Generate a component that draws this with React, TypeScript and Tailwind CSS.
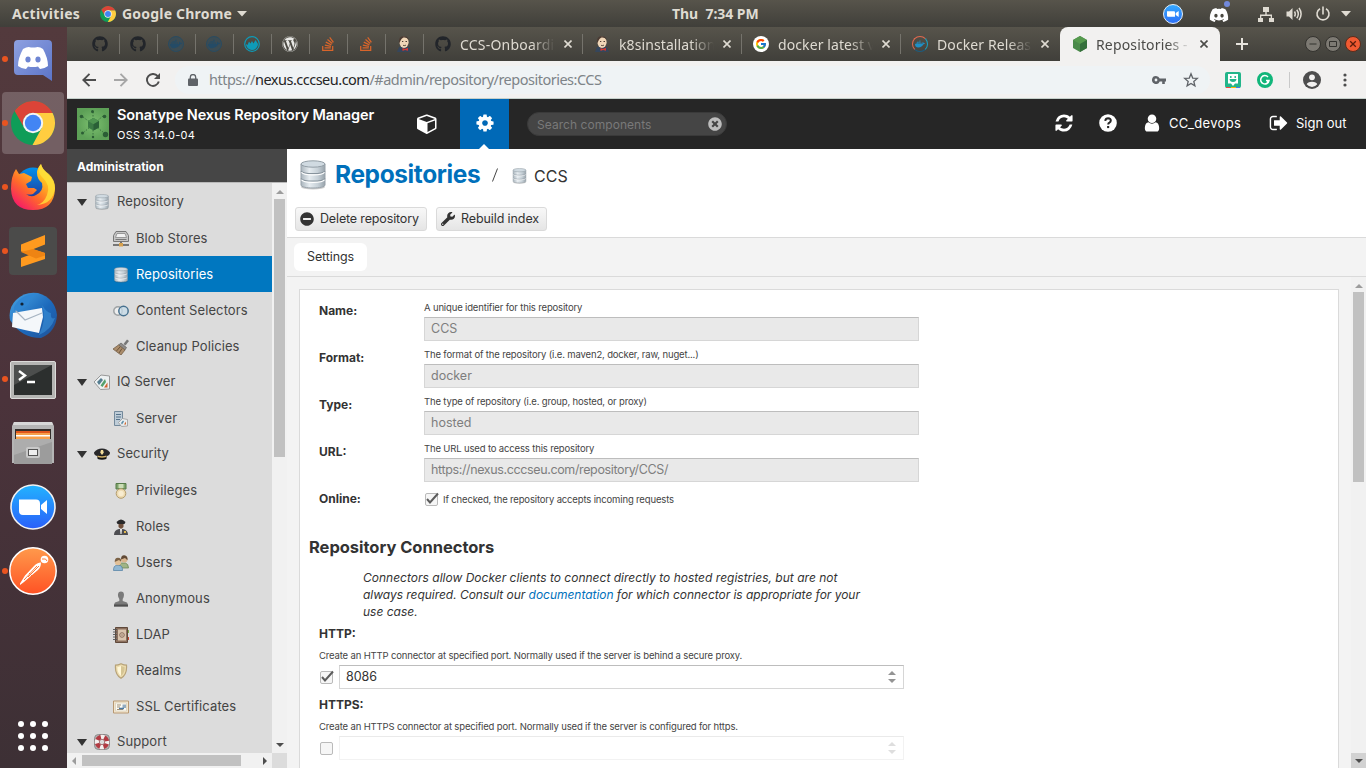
import React from "react";
import { FaGithub, FaWordpress, FaDocker, FaDiscord, FaWrench, FaMinusCircle, FaTimesCircle, FaStackOverflow } from "react-icons/fa";
import { FcGoogle } from "react-icons/fc";

type IconProps = { className?: string };

const PATHS = {
  cube: "M896 1629l640-349v-636l-640 233v752zm-64-865l698-254-698-254-698 254zm832-252v768q0 35-18 65t-49 47l-704 384q-28 16-61 16t-61-16l-704-384q-31-17-49-47t-18-65v-768q0-40 23-73t61-47l704-256q22-8 44-8t44 8l704 256q38 14 61 47t23 73z",
  cog: "M1152 896q0-106-75-181t-181-75-181 75-75 181 75 181 181 75 181-75 75-181zm512-109v222q0 12-8 23t-20 13l-185 28q-19 54-39 91 35 50 107 138 10 12 10 25t-9 23q-27 37-99 108t-94 71q-12 0-26-9l-138-108q-44 23-91 38-16 136-29 186-7 28-36 28h-222q-14 0-24.5-8.5t-11.5-21.5l-28-184q-49-16-90-37l-141 107q-10 9-25 9-14 0-25-11-126-114-165-168-7-10-7-23 0-12 8-23 15-21 51-66.5t54-70.5q-27-50-41-99l-183-27q-13-2-21-12.5t-8-23.5v-222q0-12 8-23t19-13l186-28q14-46 39-92-40-57-107-138-10-12-10-24 0-10 9-23 26-36 98.5-107.5t94.5-71.5q13 0 26 10l138 107q44-23 91-38 16-136 29-186 7-28 36-28h222q14 0 24.5 8.5t11.5 21.5l28 184q49 16 90 37l142-107q9-9 24-9 13 0 25 10 129 119 165 170 7 8 7 22 0 12-8 23-15 21-51 66.5t-54 70.5q26 50 41 98l183 28q13 2 21 12.5t8 23.5z",
  refresh: "M1639 1056q0 5-1 7-64 268-268 434.5t-478 166.5q-146 0-282.5-55t-243.5-157l-129 129q-19 19-45 19t-45-19-19-45v-448q0-26 19-45t45-19h448q26 0 45 19t19 45-19 45l-137 137q71 66 161 102t187 36q134 0 250-65t186-179q11-17 53-117 8-23 30-23h192q13 0 22.5 9.5t9.5 22.5zm25-800v448q0 26-19 45t-45 19h-448q-26 0-45-19t-19-45 19-45l138-138q-148-137-349-137-134 0-250 65t-186 179q-11 17-53 117-8 23-30 23h-199q-13 0-22.5-9.5t-9.5-22.5v-7q65-268 270-434.5t480-166.5q146 0 284 55.5t245 156.5l130-129q19-19 45-19t45 19 19 45z",
  user: "M1536 1399q0 109-62.5 187t-150.5 78h-854q-88 0-150.5-78t-62.5-187q0-85 8.5-160.5t31.5-152 58.5-131 94-89 134.5-34.5q131 128 313 128t313-128q76 0 134.5 34.5t94 89 58.5 131 31.5 152 8.5 160.5zm-256-887q0 159-112.5 271.5t-271.5 112.5-271.5-112.5-112.5-271.5 112.5-271.5 271.5-112.5 271.5 112.5 112.5 271.5z",
  signOut: "M704 1440q0 4 1 20t.5 26.5-3 23.5-10 19.5-20.5 6.5h-320q-119 0-203.5-84.5t-84.5-203.5v-704q0-119 84.5-203.5t203.5-84.5h320q13 0 22.5 9.5t9.5 22.5q0 4 1 20t.5 26.5-3 23.5-10 19.5-20.5 6.5h-320q-66 0-113 47t-47 113v704q0 66 47 113t113 47h312l11.5 1 11.5 3 8 5.5 7 9 2 13.5zm928-544q0 26-19 45l-544 544q-19 19-45 19t-45-19-19-45v-288h-448q-26 0-45-19t-19-45v-384q0-26 19-45t45-19h448v-288q0-26 19-45t45-19 45 19l544 544q19 19 19 45z",
};

function Glyph({ d, className }: { d: string; className?: string }) {
  return <svg viewBox="0 0 1792 1792" fill="currentColor" className={className}><path d={d} /></svg>;
}

function Chrome({ className }: IconProps) {
  return (
    <svg viewBox="0 0 44 44" className={className}>
      <circle cx="22" cy="22" r="22" fill="#0f9d58" />
      <path d="M22 12h19.6A22 22 0 0 1 21.500 44L30.700 27z" fill="#ffcd40" />
      <path d="M3.600 10A22 22 0 0 1 41.600 12H22A10 10 0 0 0 13.300 27z" fill="#db4437" />
      <circle cx="22" cy="22" r="10.200" fill="#f5f5f5" />
      <circle cx="22" cy="22" r="8.200" fill="#4285f4" />
    </svg>
  );
}

function Jenkins({ className }: IconProps) {
  return (
    <svg viewBox="0 0 16 16" className={className}>
      <path d="M1 16l2-5 4-1 6 1 2 5z" fill="#35465c" />
      <ellipse cx="8" cy="6.200" rx="4.600" ry="5.700" fill="#f0d6b7" />
      <path d="M3.300 7.500C2 2 5 .3 8 .3s5 2 4.400 3.600C11 1.800 9 1.200 7 1.800 5 2.600 4.600 5 3.300 7.500z" fill="#4a3a32" />
      <path d="M6 5.500h1.300M9.500 5.500H11M7 9.200c1 .6 2 .5 3-.2" stroke="#3b2c25" strokeWidth=".9" fill="none" />
      <path d="M6.500 12l2.500 1 3-1.300v3L9 14l-2.500 1z" fill="#d33833" />
    </svg>
  );
}

function Whale({ className }: IconProps) {
  return (
    <span className={"flex items-center justify-center rounded-full border border-[#2a4b60] bg-[#3c4c53] text-[#244b66] " + className}>
      <FaDocker className="size-3" />
    </span>
  );
}

function BlueLogo() {
  return (
    <svg viewBox="0 0 16 16" className="size-4">
      <circle cx="8" cy="8" r="7.300" fill="none" stroke="#0e9bb8" strokeWidth="1.200" />
      <path d="M2 8l1.500 1L5 5.500 6.500 7.500 8 5l1.500 2.500L11.500 4l2.500 4a6 6 0 0 1-12 0z" fill="#0e9bb8" />
    </svg>
  );
}

function NexusHex({ className }: IconProps) {
  return (
    <svg viewBox="0 0 16 16" className={className}>
      <path d="M8 0l7 4v8l-7 4-7-4V4z" fill="#4a8a4a" />
      <path d="M8 0l7 4-7 4-7-4z" fill="#569a4e" />
      <path d="M8 8l7-4v8l-7 4z" fill="#35703c" />
    </svg>
  );
}

function Database({ className }: IconProps) {
  return (
    <svg viewBox="0 0 26 30" className={className}>
      <defs>
        <linearGradient id="steel" x1="0" x2="1">
          <stop offset="0" stopColor="#aab5bd" /><stop offset=".35" stopColor="#e6ecf0" />
          <stop offset=".7" stopColor="#c6d0d7" /><stop offset="1" stopColor="#98a3ab" />
        </linearGradient>
      </defs>
      <ellipse cx="13" cy="27" rx="12" ry="2.500" fill="#000" opacity=".2" />
      <path d="M1 4v21c0 4 24 4 24 0V4z" fill="url(#steel)" stroke="#98a2aa" strokeWidth="1" />
      <ellipse cx="13" cy="4" rx="12" ry="3.200" fill="#d0dae1" stroke="#939ea6" strokeWidth="1" />
      <path d="M1 11c2 3.500 22 3.500 24 0M1 18.500c2 3.500 22 3.500 24 0" fill="none" stroke="#87939c" strokeWidth="1.200" />
      <path d="M1.500 12.200c2 3.500 21 3.500 23 0M1.500 19.700c2 3.500 21 3.500 23 0" fill="none" stroke="#fff" strokeWidth="1.200" />
    </svg>
  );
}

/* ---------- top desktop bar ---------- */
function DesktopBar() {
  return (
    <div className="flex h-[27px] shrink-0 items-center bg-linear-to-b from-[#57544b] to-[#403f3a] font-['Noto_Sans','Open_Sans',sans-serif] text-[14px] font-bold text-[#dfdbd2]">
      <span className="w-[88px] pl-3 tracking-[0.32px]">Activities</span>
      <div className="flex w-[584px] items-center pl-3">
        <Chrome className="size-4" />
        <span className="ml-[6px] w-[111px] tracking-[0.2px] whitespace-nowrap">Google Chrome</span>
        <svg viewBox="0 0 10 6" className="ml-1 h-[6px] w-[10px]"><path d="M0 0h10L5 5.500z" fill="#dfdbd2" /></svg>
      </div>
      <span className="w-[491px] whitespace-pre text-[14px] tracking-[-0.03px]">Thu  7:34 PM</span>
      <svg viewBox="0 0 20 20" className="size-5">
        <defs><linearGradient id="zoomSmall" x2="0" y2="1"><stop stopColor="#34aaff" /><stop offset="1" stopColor="#2d6ff7" /></linearGradient></defs>
        <circle cx="10" cy="10" r="9.500" fill="url(#zoomSmall)" stroke="#e5eef5" />
        <path d="M4 7.200h7q1 0 1 1v4.600H5q-1 0-1-1zM12.700 9l3-2v6l-3-2z" fill="#fff" />
      </svg>
      <span className="relative ml-[26px] flex">
        <FaDiscord className="size-5 translate-y-px text-white" />
        <i className="absolute -right-px -top-[3px] size-1.5 rounded-full bg-[#7289da]" />
      </span>
      <svg viewBox="0 0 16 16" className="ml-[29px] size-4 translate-y-px" fill="#dfdbd2"><path d="M5 0h6v5H8.700v2.500H14V11h2v4h-5v-4h1.700V8.900H3.300V11H5v4H0v-4h2V7.500h5.300V5H5z" /></svg>
      <svg viewBox="0 0 16 16" className="ml-3 size-4" fill="none" stroke="#dfdbd2" strokeWidth="1.500"><path d="M.5 5.500H3L6.500 2v12L3 10.500H.5z" fill="#dfdbd2" stroke="none" /><path d="M8.500 5.500q1.500 2.500 0 5M10.800 3.800q3 4.200 0 8.400M13 2q4.200 6 0 12" /></svg>
      <svg viewBox="0 0 16 16" className="ml-[13px] size-4" fill="none" stroke="#dfdbd2" strokeWidth="1.600"><path d="M8 .5v8M5 2.700a6 6 0 1 0 6 0" /></svg>
      <svg viewBox="0 0 10 6" className="ml-[10px] h-[6px] w-[10px]"><path d="M0 0h10L5 5.500z" fill="#dfdbd2" /></svg>
    </div>
  );
}

/* ---------- launcher ---------- */
function DockItem({ children, running, active }: { children: React.ReactNode; running?: boolean; active?: boolean }) {
  return (
    <div className={"relative flex h-[62px] w-[62px] items-center justify-center rounded-[4px] " + (active ? "bg-white/20" : "")}>
      {running && <i className="absolute left-0 top-7 size-[6px] rounded-full bg-[#e95420]" />}
      {children}
    </div>
  );
}

function Dock() {
  return (
    <aside className="flex w-[67px] shrink-0 flex-col items-center gap-[2px] bg-linear-to-b from-[#533a3d] via-[#4b333b] to-[#3d3035] pt-px pr-[2px]">
      <DockItem running>
        <svg viewBox="0 0 38 41" className="h-[41px] w-[38px] translate-y-px">
          <defs><linearGradient id="dsc" x2="1" y2="1"><stop stopColor="#8ea1e1" /><stop offset="1" stopColor="#5b74c8" /></linearGradient></defs>
          <path d="M4 0h30q4 0 4 4v37l-9-6H4q-4 0-4-4V4q0-4 4-4z" fill="url(#dsc)" />
          <path d="M9 9q5-3 8-1.500h4Q25 6 29 9q5 9 5 17-4 3-8 3l-2-2.500q-5 1-10 0L12 29q-4 0-8-3 0-8 5-17z" fill="#fff" />
          <ellipse cx="14" cy="19.500" rx="2.600" ry="3" fill="#6e85d3" /><ellipse cx="24" cy="19.500" rx="2.600" ry="3" fill="#6e85d3" />
        </svg>
      </DockItem>
      <DockItem running active><Chrome className="size-11" /></DockItem>
      <DockItem running>
        <svg viewBox="0 0 44 46" className="h-[46px] w-[44px]">
          <defs>
            <linearGradient id="foxA" x1="1" x2=".2" y2="1"><stop stopColor="#fff44f" /><stop offset=".35" stopColor="#ffbd20" /><stop offset=".65" stopColor="#ff6a2a" /><stop offset="1" stopColor="#f5156c" /></linearGradient>
            <linearGradient id="foxB" x2="0" y2="1"><stop stopColor="#0090ed" /><stop offset="1" stopColor="#253494" /></linearGradient>
          </defs>
          <circle cx="22" cy="20" r="16.500" fill="url(#foxB)" />
          <path d="M5 5l3 5 5-1 8 4-1 4-5 3 2 4 6 0 3 2-4 4q-4 1-7 0 5 4 10 1 8-4 6-12-5-4-5-10 0-5 4-9 1 5 6 9 8 7 8 16-1 21-22 21T0 25Q0 12 5 5z" fill="url(#foxA)" />
          <path d="M30 0q-5 7 1 13 9 8 5 18-3 8-10 10 16-1 18-17 0-8-6-14Q31 5 30 0z" fill="#ffe03a" opacity=".8" />
        </svg>
      </DockItem>
      <DockItem running>
        <svg viewBox="0 0 48 48" className="size-12">
          <rect width="48" height="48" rx="4" fill="#4b4b4a" />
          <path d="M12 17.500L36 8v9.500l-12 4.700 12 3.800v6L12 40v-9l11-4-11-2.500z" fill="#ff9a1f" />
          <path d="M12 25l12-3 12 4v2.500l-9 3z" fill="#ee8413" />
        </svg>
      </DockItem>
      <DockItem>
        <svg viewBox="0 0 48 48" className="size-12">
          <defs><linearGradient id="bird" x2="1" y2="1"><stop stopColor="#4aa6e5" /><stop offset=".55" stopColor="#1c69bb" /><stop offset="1" stopColor="#215196" /></linearGradient></defs>
          <path d="M7 9Q16 0 29 2q17 5 19 22-1 17-16 23-20 0-31-18Q-1 17 7 9z" fill="url(#bird)" />
          <path d="M3 36l1-14L33 17l1 9-4 16Q15 39 3 36z" fill="#f4f7fa" />
          <path d="M6 19l10 10 17-7" fill="none" stroke="#a7b4c2" strokeWidth="1.200" />
          <path d="M5 16Q12 2 30 3 20 6 20 13q-6 6-15 7z" fill="#2f86d3" /><circle cx="13" cy="13" r="1.600" fill="#123" />
          <path d="M33 14q5 14-3 30 12-5 16-17-5 2-4-5-4 0-9-8z" fill="#3a91d9" opacity=".6" />
        </svg>
      </DockItem>
      <DockItem running>
        <svg viewBox="0 0 46 38" className="h-[38px] w-[46px] translate-y-px">
          <rect x=".5" y=".5" width="45" height="37" rx="1.500" fill="#b5b5b3" stroke="#dcdcda" />
          <rect x="4" y="4" width="38" height="30" fill="#2c2f2e" /><path d="M4 4h38L4 24z" fill="#6b6d6b" opacity=".5" />
          <path d="M9 10l6 4.500L9 19M17 21h8" fill="none" stroke="#fff" strokeWidth="2.400" />
        </svg>
      </DockItem>
      <DockItem>
        <svg viewBox="0 0 42 44" className="h-[44px] w-[42px]">
          <path d="M2 1h38l2 4v37H0V5z" fill="#b5b5b5" /><path d="M2 1h38l1 3H1z" fill="#d8d8d8" />
          <path d="M3 8h36v11H3z" fill="#332d2a" /><path d="M4 10h34v8H4z" fill="#e0561d" /><path d="M4 12h34v7H4z" fill="#f6a04d" /><path d="M4 14h34v1.500H4z" fill="#fff" />
          <path d="M2 18h38v25H2z" fill="#9c9c9c" /><path d="M2 18h38v3L2 34z" fill="#adadad" />
          <rect x="14" y="26" width="14" height="11" rx="2" fill="#c9c9c9" /><rect x="16.500" y="28.500" width="9" height="6" fill="#eee" stroke="#555" />
        </svg>
      </DockItem>
      <DockItem>
        <svg viewBox="0 0 46 46" className="size-[46px]">
          <defs><linearGradient id="zoomBig" x2="0" y2="1"><stop stopColor="#22b3ff" /><stop offset="1" stopColor="#2a5ff9" /></linearGradient></defs>
          <circle cx="23" cy="23" r="22" fill="url(#zoomBig)" stroke="#f2f2f2" strokeWidth="1.600" />
          <path d="M9 15.500h17q4 0 4 4V31H13q-4 0-4-4zM31 21l6-5v14l-6-5z" fill="#fff" />
        </svg>
      </DockItem>
      <DockItem running>
        <svg viewBox="0 0 48 48" className="size-12">
          <defs><linearGradient id="pm" x2="0" y2="1"><stop stopColor="#ff9a4c" /><stop offset="1" stopColor="#ff5224" /></linearGradient></defs>
          <circle cx="24" cy="24" r="23.200" fill="url(#pm)" stroke="#fff" strokeWidth="1.500" />
          <path d="M11 36.500l5-8L25 19q3-3.500 7-3.500 0 4.500-3 7.500l-6 5-8 7-4 3z" fill="#fff" /><circle cx="35.500" cy="12.500" r="3.800" fill="#fff" />
          <path d="M15 33l13-14M19 30l11-11M20 26l3 3M33 12h3.500l1.500 2" fill="none" stroke="#ff7a38" strokeWidth="1" />
        </svg>
      </DockItem>
      <div className="mt-auto mb-[17px] grid grid-cols-3 gap-[6px]">
        {Array.from({ length: 9 }, (_, i) => <i key={i} className="size-[6px] rounded-full bg-white" />)}
      </div>
    </aside>
  );
}

/* ---------- browser ---------- */
const ORANGE = <FaStackOverflow className="size-4 text-[#d9652b]" />;
const PINNED = [
  <FaGithub className="size-4 text-[#22252a]" />, <FaGithub className="size-4 text-[#22252a]" />,
  <Whale className="size-4" />, <Whale className="size-4" />, <BlueLogo />,
  <FaWordpress className="size-4 text-[#e9e9e6]" />, ORANGE, ORANGE, <Jenkins className="size-4" />,
];
const TABS = [
  { icon: <FaGithub className="size-4 text-[#22252a]" />, title: "CCS-Onboardi", tone: "tracking-[0.2px]" },
  { icon: <Jenkins className="size-4" />, title: "k8sinstallation", tone: "tracking-[0.1px]" },
  { icon: <span className="rounded-full bg-white p-0.5"><FcGoogle className="size-3" /></span>, title: "docker latest v", tone: "tracking-[0.1px]" },
  { icon: <span className="flex size-4 items-center justify-center rounded-full border-[1.5px] border-[#e2694f] border-r-[#18a5c6] border-b-[#1b5c80] text-[#1f8fc6]"><FaDocker className="size-2.5" /></span>, title: "Docker Release", tone: "tracking-[0.1px]" },
];

function Close() {
  return <svg viewBox="0 0 8 8" className="size-2 shrink-0" stroke="currentColor" strokeWidth="1.600"><path d="M.5 .5l7 7M7.500 .5l-7 7" /></svg>;
}

function TabStrip() {
  return (
    <div className="flex h-[34px] shrink-0 items-center bg-linear-to-b from-[#57544b] to-[#403f3a] pl-[15px] font-['Noto_Sans','Open_Sans',sans-serif] text-[14px] text-[#dfdbd2]">
      {PINNED.map((icon, i) => (
        <div key={i} className="flex h-5 w-[38px] shrink-0 items-center justify-center border-r border-[#75736c] pr-[2px]">{icon}</div>
      ))}
      {TABS.map((t, i) => (
        <div key={t.title} className={"flex h-5 w-[159px] shrink-0 items-center pl-[11px] " + (i < 3 ? "border-r border-[#75736c]" : "")}>
          <span className="flex w-[25px] shrink-0">{t.icon}</span>
          <span className={"w-[95px] shrink-0 overflow-hidden whitespace-nowrap mask-r-from-75% mask-r-to-100% " + t.tone}>{t.title}</span>
          <span className="ml-[9px] flex"><Close /></span>
        </div>
      ))}
      <div className="flex h-[34px] w-[160px] shrink-0 items-center rounded-t-lg bg-[#f2f1f0] pl-[12px] text-[#4b4b48]">
        <span className="flex w-6 shrink-0"><NexusHex className="size-4" /></span>
        <span className="w-[95px] shrink-0 overflow-hidden whitespace-pre tracking-[0.15px] mask-r-from-75% mask-r-to-100%">Repositories - N</span>
        <span className="ml-[9px] flex"><Close /></span>
      </div>
      <svg viewBox="0 0 12 12" className="ml-4 size-3" stroke="#e6e3dc" strokeWidth="2"><path d="M6 0v12M0 6h12" /></svg>
      <div className="mr-[5px] ml-auto flex gap-1">
        <svg viewBox="0 0 16 16" className="size-4"><circle cx="8" cy="8" r="7.500" fill="#7d7a73" stroke="#34332f" /><path d="M4.500 8h7" stroke="#33322e" /></svg>
        <svg viewBox="0 0 16 16" className="size-4"><circle cx="8" cy="8" r="7.500" fill="#7d7a73" stroke="#34332f" /><path d="M4.500 5.500h7v5h-7z" fill="none" stroke="#33322e" /></svg>
        <svg viewBox="0 0 16 16" className="size-4"><circle cx="8" cy="8" r="7.500" fill="#f05a32" stroke="#5a2c1c" /><path d="M5.200 5.200l5.600 5.600m0-5.600l-5.600 5.600" stroke="#5b1c0b" strokeWidth="1.300" /></svg>
      </div>
    </div>
  );
}

function AddressBar() {
  return (
    <div className="flex h-[38px] shrink-0 items-center border-b border-[#c5d0cb] bg-[#f2f1f0] pl-[15px] text-[#4d4d4d]">
      <svg viewBox="0 0 14 14" className="size-[14px]" fill="none" stroke="currentColor" strokeWidth="1.900"><path d="M14 7H1.500M7.500 .8L1.300 7l6.200 6.200" /></svg>
      <svg viewBox="0 0 14 14" className="ml-[18px] size-[14px] text-[#a6a6a6]" fill="none" stroke="currentColor" strokeWidth="1.900"><path d="M0 7h12.500M6.500 .8L12.700 7l-6.200 6.200" /></svg>
      <svg viewBox="0 0 14 14" className="ml-[18px] size-[14px]"><path d="M11.700 3.200A6 6 0 1 0 12.800 8.500" fill="none" stroke="currentColor" strokeWidth="1.900" /><path d="M14 0v6H8z" fill="currentColor" /></svg>
      <div className="ml-[15px] flex h-7 w-[1035px] items-center rounded-full bg-[#eff3f5] pl-[13px]">
        <svg viewBox="0 0 10 12" className="h-3 w-2.5 text-[#5f6368]"><rect y="4.500" width="10" height="7.500" rx="1" fill="currentColor" /><path d="M2.300 5V3.200a2.700 2.700 0 0 1 5.400 0V5" fill="none" stroke="currentColor" strokeWidth="1.300" /></svg>
        <span className="ml-[11px] font-['Noto_Sans','Open_Sans',sans-serif] text-[14.500px] tracking-[-0.5px] whitespace-nowrap text-[#7e8488]">https://<span className="text-[#252525]">nexus.cccseu.com</span>/#admin/repository/repositories:CCS</span>
        <svg viewBox="0 0 14 8" className="ml-auto h-2 w-[14px] text-[#5f6368]"><path d="M4 0a4 4 0 0 1 3.700 2.600H14v2.800h-1.200V8h-2.600V5.400H7.700A4 4 0 1 1 4 0zm0 2.600a1.400 1.400 0 1 0 0 2.800 1.400 1.400 0 0 0 0-2.800z" fill="currentColor" fillRule="evenodd" /></svg>
        <svg viewBox="0 0 16 16" className="mr-[11px] ml-[17px] size-4 text-[#5f6368]"><path d="M8 1.800l1.700 4.300 4.600.3-3.500 3 1.100 4.500L8 11.400l-3.900 2.500 1.100-4.500-3.500-3 4.600-.3z" fill="none" stroke="currentColor" strokeWidth="1.300" /></svg>
      </div>
      <svg viewBox="0 0 16 16" className="ml-[15px] size-4"><rect width="16" height="16" rx="2" fill="#23b58a" /><path d="M3 2h10v9.500H10L8 14l-2-2.500H3z" fill="#fff" /><path d="M5.800 4v2M10.200 4v2" stroke="#23b58a" strokeWidth="1.400" /><path d="M4.500 7h7q-.3 3-3.500 3T4.500 7z" fill="#23b58a" /><path d="M1 15.500h4" stroke="#f5413c" /><path d="M6 15.500h5" stroke="#ffb300" /><path d="M11 15.500h4" stroke="#3f7be8" /></svg>
      <svg viewBox="0 0 16 16" className="ml-4 size-4"><circle cx="8" cy="8" r="8" fill="#11b67a" /><path d="M11 5a4.200 4.200 0 1 0 1 3.500H9M11 9l-1 2" fill="none" stroke="#fff" strokeWidth="1.500" /></svg>
      <i className="ml-4 h-4 w-px bg-[#c9c9c9]" />
      <svg viewBox="0 0 18 18" className="ml-[13px] size-[18px]"><circle cx="9" cy="9" r="9" fill="currentColor" /><circle cx="9" cy="6.300" r="2.900" fill="#f2f1f0" /><path d="M3.700 13.300q.8-2.600 5.300-2.600t5.300 2.600Q12 16 9 16t-5.300-2.700z" fill="#f2f1f0" /></svg>
      <svg viewBox="0 0 4 14" className="ml-[22px] h-[14px] w-1" fill="currentColor"><circle cx="2" cy="2" r="1.600" /><circle cx="2" cy="7" r="1.600" /><circle cx="2" cy="12" r="1.600" /></svg>
    </div>
  );
}

/* ---------- Nexus ---------- */
function Header() {
  return (
    <header className="flex h-[50px] shrink-0 items-center bg-[#262626] pl-[10px] text-[13px] text-white">
      <svg viewBox="0 0 32 32" className="size-8">
        <defs><radialGradient id="leaf"><stop stopColor="#7cc06f" /><stop offset="1" stopColor="#5da057" /></radialGradient></defs>
        <rect width="32" height="32" fill="url(#leaf)" />
        <path d="M6 9l20 15M26 8L6 25M16 4v24" stroke="#3c7541" strokeDasharray="1.500 1.500" />
        <g fill="#2b5d35"><circle cx="4.500" cy="8.500" r="1.800" /><circle cx="27.500" cy="8.500" r="1.800" /><circle cx="15.500" cy="3.500" r="1.500" /><circle cx="5.500" cy="25" r="1.500" /><circle cx="28.500" cy="26.500" r="2.700" /><circle cx="16" cy="29" r="1.200" /></g>
        <path d="M16.500 10l5.500 3v6.500l-5.500 3-5.500-3V13z" fill="#3b7a44" /><path d="M16.500 10l5.500 3-5.500 3.200L11 13z" fill="#4e9450" /><path d="M16.500 16.200L22 13v6.500l-5.500 3z" fill="#2a6037" />
      </svg>
      <div className="ml-2 flex w-[292px] flex-col">
        <span className="h-5 text-[14.500px] leading-[18px] font-semibold tracking-[-0.1px] whitespace-nowrap">Sonatype Nexus Repository Manager</span>
        <span className="h-4 text-[11px] leading-[18px] tracking-[0.28px]">OSS 3.14.0-04</span>
      </div>
      <div className="flex w-[51px] pl-2"><Glyph d={PATHS.cube} className="size-[21px] -translate-y-px" /></div>
      <div className="relative flex h-[50px] w-[49px] items-center justify-center bg-[#0069b7]">
        <Glyph d={PATHS.cog} className="size-5 -translate-y-px" />
        <svg viewBox="0 0 10 5" className="absolute bottom-0 left-[19px] h-[5px] w-[10px]"><path d="M0 5l5-5 5 5z" fill="#fff" /></svg>
      </div>
      <div className="ml-[18px] flex h-6 w-[200px] items-center justify-between rounded-full border border-[#3a3a3a] bg-[#454545] pr-1 pl-[9px] text-[#797979]">
        <span className="translate-y-px text-[12px] tracking-[0.05px]">Search components</span>
        <FaTimesCircle className="size-[14px] text-[#bdbdbd]" />
      </div>
      <div className="mr-5 ml-auto flex items-center">
        <Glyph d={PATHS.refresh} className="size-5 -translate-y-px" />
        <svg viewBox="0 0 18 18" className="ml-[25px] size-[18px] -translate-y-px"><circle cx="9" cy="9" r="8.800" fill="#fff" /><path d="M6.200 6.800q.4-2.500 2.900-2.500 2.700.1 2.700 2.300 0 1.300-1.400 2.100-1.200.6-1.200 1.800" fill="none" stroke="#262626" strokeWidth="2" /><path d="M8.100 12h2.100v2.100H8.100z" fill="#262626" /></svg>
        <Glyph d={PATHS.user} className="ml-[25px] size-5 -translate-y-px" />
        <span className="ml-[7px] w-[100px] tracking-[0.3px]">CC_devops</span>
        <Glyph d={PATHS.signOut} className="size-5 -translate-y-px" />
        <span className="ml-[7px] w-[50px] whitespace-nowrap">Sign out</span>
      </div>
    </header>
  );
}

type TreeIcon = "db" | "blob" | "rings" | "broom" | "iq" | "server" | "cap" | "medal" | "officer" | "users" | "anon" | "book" | "shield" | "cert" | "buoy";

const ART: Record<Exclude<TreeIcon, "db">, React.ReactNode> = {
  blob: <g><path d="M3 .5h10l2.500 4v6H.5v-6z" fill="#c5c5c5" stroke="#777" /><path d="M4 2.500h8l1.500 4h-11z" fill="#f1f1f1" stroke="#888" strokeWidth=".8" /><path d="M2.500 8.500h11" stroke="#777" /><path d="M0 14h16M8 11v2" stroke="#555" strokeWidth="1.600" /><path d="M6 12h4v3.500H6z" fill="#d8a24f" /></g>,
  rings: <g fill="none" strokeWidth="1.500"><circle cx="5" cy="8" r="4.200" stroke="#9fa3a5" fill="#eee" /><circle cx="10.500" cy="8" r="4.700" stroke="#47718f" fill="#c4dcea" fillOpacity=".7" /></g>,
  broom: <g><path d="M10.500 5l3.500-4.500 2 1.500-3.500 4.500z" fill="#777" /><path d="M8 4l5.500 4.500L12 11 5.500 6z" fill="#8d8a88" stroke="#555" strokeWidth=".6" /><path d="M5.500 6l6.500 5-4 5L0 10z" fill="#ab8d6c" stroke="#755f47" strokeWidth=".8" /><path d="M7 8l-3.500 4M9 9.500L6 14" stroke="#6c543b" /></g>,
  iq: <g><path d="M0 8l7-7 8.500 1v13l-9 .5z" fill="#eef1f2" stroke="#989898" /><path d="M3 8l4-4 2 2-4 5z" fill="#557d90" /><path d="M6.500 11.500L11 5l1 3-3.500 5z" fill="#54a06c" /><path d="M10 13.500l3.500-5v5z" fill="#d2632e" /></g>,
  server: <g><path d="M1.500 .5h8v14h-8z" fill="#bfcdd8" stroke="#73899b" /><path d="M3 3.500h5M3 6h5M3 8.500h4" stroke="#56738b" /><path d="M5.500 11.500l4-4 5 1v6.500l-6 .5z" fill="#e9edef" stroke="#999" strokeWidth=".8" /><path d="M8 12l2-2.500 1 1-2 3z" fill="#578ba4" /><path d="M11 13.500l2-3v3z" fill="#d3692f" /></g>,
  cap: <g><path d="M0 6.500Q3 2.500 8 2.500t8 4Q16 9 13 10H3Q0 9 0 6.500z" fill="#28282a" /><path d="M3 9.500h10l-.7 3.500Q8 14.500 3.700 13z" fill="#121212" /><path d="M3.500 9.500q4.500 1.600 9 0v1.500q-4.500 1.500-9 0z" fill="#d4b56b" /><path d="M7 4h2l.8 2.500-1.800 2.500-1.800-2.500z" fill="#f5df9c" /></g>,
  medal: <g><path d="M3 .5h10V6H3z" fill="#7fa36b" stroke="#567b49" /><path d="M5.500 1v4h5V1" fill="#cbddb6" /><circle cx="8" cy="10.500" r="4.800" fill="#eddab0" stroke="#b39c6d" /><circle cx="8" cy="10.500" r="2.700" fill="#f8ecd0" /></g>,
  officer: <g><path d="M1 16q0-5 5-6h4q5 1 5 6z" fill="#4d4d51" /><path d="M5.500 4h5v4Q8 11.500 5.500 8z" fill="#70503c" /><path d="M3.500 3Q8-2 12.500 3l-1 2h-7z" fill="#29292b" /><path d="M7 10h2l-.5 5h-1z" fill="#eee" /><path d="M11 12h2v2h-2z" fill="#e0b74e" /></g>,
  users: <g><path d="M6.500 11.500q0-3 2-3.500h4q3 1 3 5H7z" fill="#a0b487" stroke="#64814f" strokeWidth=".7" /><circle cx="11.300" cy="4.300" r="3.200" fill="#dab58e" /><path d="M8 4.500Q8 0 11.300.2q3.700.3 3.200 5L12 3z" fill="#614a36" /><path d="M.5 15.500q0-5 3-5h3q3 0 3 5z" fill="#91b7d2" stroke="#4e7da2" strokeWidth=".7" /><circle cx="5" cy="7" r="3.200" fill="#e2c097" /><path d="M1.700 7Q1.700 2.600 5 2.700q3.500 0 3.200 4L6 5z" fill="#7b6145" /></g>,
  anon: <g fill="#7a7a7a"><path d="M8 .5c3 0 3.600 3 2.500 6L9.700 8v2L14 11.500q1 .8 1 4H1q0-3.200 1-4L6.300 10V8L5.500 6.500C4.400 3.500 5 .5 8 .5z" /><path d="M1 13.500h14v2H1z" fill="#505050" /></g>,
  book: <g><path d="M2.500 .5h12v15h-12z" fill="#8b6f5d" stroke="#5f493b" /><path d="M5 2.500h8v11H5z" fill="#d9c4ad" /><circle cx="9" cy="8" r="2.300" fill="none" stroke="#8b6f5d" /><path d="M9 7.300v1.500" stroke="#8b6f5d" /><path d="M0 2.500h4M0 5h4M0 7.500h4M0 10h4M0 12.500h4" stroke="#555" strokeWidth=".9" /><path d="M15.500 3v3" stroke="#80a850" /><path d="M15.500 10v3" stroke="#c54632" /></g>,
  shield: <g><path d="M8 .7q3 1.500 5.500 1.500.8 9-5.500 13.100Q1.700 11.200 2.500 2.200 5 2.200 8 .7z" fill="#ecdcae" stroke="#b7a278" strokeWidth="1.200" /><path d="M8 3v10Q4.200 10 4.400 4.200z" fill="#fff7d9" /><path d="M8 3v10q3.800-3 3.600-8.800z" fill="#d6c594" /></g>,
  cert: <g><path d="M.5 2h15v12H.5z" fill="#f1e6cf" stroke="#b89872" /><path d="M2.500 4h11v8h-11z" fill="#fbfaf4" stroke="#d8cbb5" strokeWidth=".7" /><path d="M4 6h4M4 8h3M4 10.500h6" stroke="#a18f74" /><path d="M9.500 5.500H13V9H9.500z" fill="#94acc0" /><path d="M6 9.500h5" stroke="#4d7aa3" strokeWidth="1.500" /></g>,
  buoy: <g><rect x=".5" y=".5" width="15" height="15" rx="4" fill="#b7b7b7" stroke="#8a8a8a" /><circle cx="8" cy="8" r="5" fill="none" stroke="#b33a42" strokeWidth="4.500" /><circle cx="8" cy="8" r="5" fill="none" stroke="#f3f0ef" strokeWidth="4.500" strokeDasharray="3.500 4.350" strokeDashoffset="1.750" /><circle cx="8" cy="8" r="2.700" fill="#dcdcdc" stroke="#8c3a3f" strokeWidth=".6" /></g>,
};

const TREE: { label: string; icon: TreeIcon; group?: boolean; active?: boolean }[] = [
  { label: "Repository", icon: "db", group: true },
  { label: "Blob Stores", icon: "blob" },
  { label: "Repositories", icon: "db", active: true },
  { label: "Content Selectors", icon: "rings" },
  { label: "Cleanup Policies", icon: "broom" },
  { label: "IQ Server", icon: "iq", group: true },
  { label: "Server", icon: "server" },
  { label: "Security", icon: "cap", group: true },
  { label: "Privileges", icon: "medal" },
  { label: "Roles", icon: "officer" },
  { label: "Users", icon: "users" },
  { label: "Anonymous", icon: "anon" },
  { label: "LDAP", icon: "book" },
  { label: "Realms", icon: "shield" },
  { label: "SSL Certificates", icon: "cert" },
  { label: "Support", icon: "buoy", group: true },
];

function TreeArt({ name }: { name: TreeIcon }) {
  if (name === "db") return <Database className="size-4" />;
  return <svg viewBox="0 0 16 16" className="size-4">{ART[name]}</svg>;
}

function Arrow({ dir, dark }: { dir: "up" | "down" | "left" | "right"; dark?: boolean }) {
  const d = { up: "M0 6l4-4 4 4z", down: "M0 2l4 4 4-4z", left: "M6 0L2 4l4 4z", right: "M2 0l4 4-4 4z" }[dir];
  return <svg viewBox="0 0 8 8" className="size-2"><path d={d} fill={dark ? "#4d4d4d" : "#9c9c9c"} /></svg>;
}

function Sidebar() {
  return (
    <nav className="flex w-[220px] shrink-0 flex-col overflow-hidden bg-[#dcdcdc]">
      <div className="flex h-[34px] shrink-0 items-center border-b border-[#b9b9b9] bg-[#464646] pl-[10px] text-[12px] font-bold tracking-[0.02px] text-white"><span className="translate-y-px">Administration</span></div>
      <div className="flex min-h-0 flex-1">
        <div className="flex min-w-0 flex-1 flex-col overflow-hidden pt-px">
          {TREE.map((n) => (
            <div key={n.label} className={"flex h-9 shrink-0 items-center text-[13px] tracking-[0.1px] " + (n.group ? "pl-[10px] " : "pt-px pl-[46px] ") + (n.active ? "bg-[#0077c0] text-white" : "text-[#444]")}>
              {n.group && <svg viewBox="0 0 10 7" className="mr-[7px] h-[7px] w-[10px]"><path d="M0 0h10L5 7z" fill="#333" /></svg>}
              <TreeArt name={n.icon} />
              <span className="ml-[7px]">{n.label}</span>
            </div>
          ))}
        </div>
        <div className="flex w-[15px] flex-col items-center bg-[#f1f1f1] pt-[5px] pb-1">
          <Arrow dir="up" />
          <div className="mt-[3px] h-[258px] w-[11px] bg-[#c1c1c1]" />
          <span className="mt-auto"><Arrow dir="down" dark /></span>
        </div>
      </div>
      <div className="flex h-[15px] shrink-0 bg-[#f1f1f1]">
        <div className="flex w-[205px] items-center pl-[3px]">
          <Arrow dir="left" />
          <div className="mr-auto ml-1 h-[11px] w-[159px] bg-[#c1c1c1]" />
          <span className="mr-[3px]"><Arrow dir="right" dark /></span>
        </div>
        <div className="w-[15px] bg-[#dcdcdc]" />
      </div>
    </nav>
  );
}

function ToolButton({ icon, children, className }: { icon: React.ReactNode; children: string; className: string }) {
  return (
    <button className={"flex h-6 items-center gap-1.5 rounded-[3px] border border-[#dadada] bg-linear-to-b from-[#f8f8f8] to-[#e5e5e5] pl-1 text-[12.500px] whitespace-nowrap text-[#333] " + className}>
      {icon}{children}
    </button>
  );
}

function Check({ on }: { on?: boolean }) {
  return (
    <svg viewBox="0 0 16 16" className="size-4 shrink-0">
      <rect x="1.500" y="2.500" width="12" height="12" rx="1.500" fill="#f6f6f6" stroke="#bababa" />
      {on && <path d="M3 8l3 3.500L14 2.500" fill="none" stroke="#5c5c5c" strokeWidth="2" />}
    </svg>
  );
}

function Field({ label, help, value, valueTone = "" }: { label: string; help: string; value: string; valueTone?: string }) {
  return (
    <div className="flex h-[47px]">
      <label className="w-[105px] pt-[2px] text-[12px] leading-4 font-bold text-[#333]">{label}</label>
      <div className="w-[495px]">
        <p className="h-[16px] text-[9.500px] leading-[14px] tracking-[-0.15px] text-[#444]">{help}</p>
        <div className="flex h-6 items-center border border-[#d6d6d6] border-t-[#bdbdbd] bg-[#e9e9e9] pt-px pl-1.5 text-[12.500px] text-[#7e7e7e]"><span className={valueTone}>{value}</span></div>
      </div>
    </div>
  );
}

function PortField({ label, help, value, faded }: { label: string; help: string; value?: string; faded?: boolean }) {
  return (
    <div className="flex h-[72px] flex-col pl-[10px]">
      <div className="h-[24px] pt-px text-[12px] leading-4 font-bold text-[#333]">{label}</div>
      <p className="h-[16px] text-[9.500px] leading-[14px] tracking-[-0.15px] text-[#444]">{help}</p>
      <div className="flex h-6 items-center">
        <Check on={!faded} />
        <div className={"ml-1 flex h-6 w-[565px] items-center justify-between border border-[#d6d6d6] border-t-[#bdbdbd] bg-white pr-[7px] pl-1.5 text-[12.500px] text-[#333] " + (faded ? "opacity-30" : "")}>
          <span className="translate-y-px">{value}</span>
          <svg viewBox="0 0 8 12" className="h-3 w-2" fill="#949494"><path d="M0 4l4-4 4 4zM0 8l4 4 4-4z" /></svg>
        </div>
      </div>
    </div>
  );
}

function Content() {
  return (
    <main className="flex min-w-0 flex-1 flex-col bg-white text-[#333]">
      <div className="flex h-[58px] shrink-0 items-center pb-[7px] pl-[13px]">
        <Database className="h-[30px] w-[26px]" />
        <h1 className="ml-[9px] w-[157px] text-[24.500px] font-bold tracking-[-0.4px] text-[#0070bb]">Repositories</h1>
        <svg viewBox="0 0 6 14" className="h-[14px] w-1.5"><path d="M5.500 .5l-5 13" stroke="#444" /></svg>
        <span className="ml-[14px] translate-y-px"><Database className="h-4 w-[15px]" /></span>
        <span className="ml-[7px] translate-y-px text-[16px]">CCS</span>
      </div>
      <div className="flex h-[31px] shrink-0 gap-[9px] border-b border-[#dadada] pl-2">
        <ToolButton className="w-[132px] tracking-[-0.15px]" icon={<FaMinusCircle className="size-[14px]" />}>Delete repository</ToolButton>
        <ToolButton className="w-[111px] tracking-[-0.1px]" icon={<FaWrench className="size-[14px]" />}>Rebuild index</ToolButton>
      </div>
      <div className="flex h-[39px] shrink-0 items-center border-b border-[#dadada] bg-[#f3f3f3] pl-[7px]">
        <div className="flex h-7 w-[73px] items-center justify-center rounded-md bg-white text-[12.500px] tracking-[-0.1px]">Settings</div>
      </div>
      <div className="flex min-h-0 flex-1 bg-[#f3f3f3]">
        <section className="mt-3 ml-3 flex h-[479px] w-[1040px] flex-col overflow-hidden border border-b-0 border-[#dadada] bg-white pt-[11px] pl-[9px]">
          <div className="pl-[10px]">
            <Field label="Name:" help="A unique identifier for this repository" value="CCS" />
            <Field label="Format:" help="The format of the repository (i.e. maven2, docker, raw, nuget...)" value="docker" />
            <Field label="Type:" help="The type of repository (i.e. group, hosted, or proxy)" value="hosted" />
            <Field label="URL:" help="The URL used to access this repository" value="https://nexus.cccseu.com/repository/CCS/" valueTone="tracking-[-0.37px]" />
            <div className="flex h-[47px]">
              <label className="w-[105px] pt-[2px] text-[12px] leading-4 font-bold">Online:</label>
              <span className="pt-0.5"><Check on /></span>
              <p className="pt-1 pl-[3px] text-[9.500px] leading-[14px] tracking-[-0.15px] text-[#444]">If checked, the repository accepts incoming requests</p>
            </div>
          </div>
          <h2 className="h-[33px] text-[16.500px] leading-[22px] font-bold tracking-[-0.03px]">Repository Connectors</h2>
          <div className="h-[56px] pl-[54px] text-[12px] leading-[17px] italic">
            <p className="tracking-[0.01px]">Connectors allow Docker clients to connect directly to hosted registries, but are not</p>
            <p className="tracking-[-0.035px]">always required. Consult our <a className="text-[#0070bb]">documentation</a> for which connector is appropriate for your</p>
            <p>use case.</p>
          </div>
          <PortField label="HTTP:" help="Create an HTTP connector at specified port. Normally used if the server is behind a secure proxy." value="8086" />
          <PortField label="HTTPS:" help="Create an HTTPS connector at specified port. Normally used if the server is configured for https." faded />
        </section>
        <div className="ml-auto flex w-[15px] flex-col items-center bg-[#f1f1f1] pt-[5px]">
          <Arrow dir="up" />
          <div className="mt-[2px] h-[190px] w-[11px] bg-[#c1c1c1]" />
          <span className="mt-auto flex h-[15px] w-[15px] items-center justify-center bg-[#d2d2d2]"><Arrow dir="down" dark /></span>
        </div>
      </div>
    </main>
  );
}

export default function App() {
  return (
    <div className="flex h-[768px] w-[1366px] flex-col overflow-hidden">
      <DesktopBar />
      <div className="flex min-h-0 flex-1">
        <Dock />
        <div className="flex min-w-0 flex-1 flex-col">
          <TabStrip />
          <AddressBar />
          <div className="flex min-h-0 flex-1 flex-col font-['Inter','Liberation_Sans',sans-serif]">
            <Header />
            <div className="flex min-h-0 flex-1">
              <Sidebar />
              <Content />
            </div>
          </div>
        </div>
      </div>
    </div>
  );
}
